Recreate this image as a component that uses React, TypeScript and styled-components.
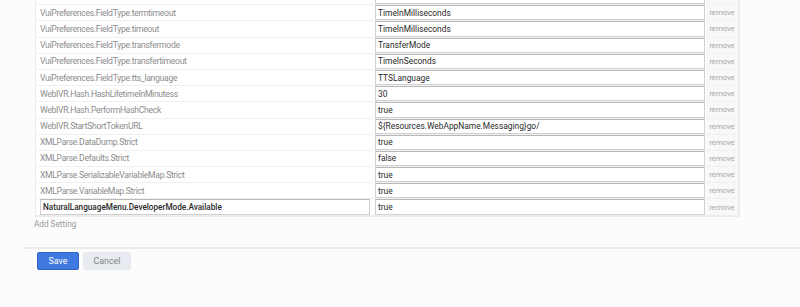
import React from 'react';
import styled, { createGlobalStyle } from 'styled-components';

type Setting = { name: string; value: string; editable?: boolean; hidden?: boolean };

const settings: Setting[] = [
  { name: '', value: '', hidden: true },
  { name: 'VuiPreferences.FieldType.termtimeout', value: 'TimeInMilliseconds' },
  { name: 'VuiPreferences.FieldType.timeout', value: 'TimeInMilliseconds' },
  { name: 'VuiPreferences.FieldType.transfermode', value: 'TransferMode' },
  { name: 'VuiPreferences.FieldType.transfertimeout', value: 'TimeInSeconds' },
  { name: 'VuiPreferences.FieldType.tts_language', value: 'TTSLanguage' },
  { name: 'WebIVR.Hash.HashLifetimeInMinutess', value: '30' },
  { name: 'WebIVR.Hash.PerformHashCheck', value: 'true' },
  { name: 'WebIVR.StartShortTokenURL', value: '${Resources.WebAppName.Messaging}go/' },
  { name: 'XMLParse.DataDump.Strict', value: 'true' },
  { name: 'XMLParse.Defaults.Strict', value: 'false' },
  { name: 'XMLParse.SerializableVariableMap.Strict', value: 'true' },
  { name: 'XMLParse.VariableMap.Strict', value: 'true' },
  { name: 'NaturalLanguageMenu.DeveloperMode.Available', value: 'true', editable: true },
];

const GlobalStyle = createGlobalStyle`
  html, body {
    margin: 0;
    padding: 0;
    background: #fcfcfc;
    font-family: Roboto, "Liberation Sans", Arial, sans-serif;
    overflow: hidden;
  }
`;

const Page = styled.div`
  width: 800px;
  height: 307px;
  overflow: hidden;
`;

const Content = styled.div`
  margin-top: -12px;
  padding-left: 35px;
  width: 705px;
`;

const Table = styled.div`
  background: #fff;
  border-left: 1px solid #ececec;
  border-right: 2px solid #ececec;
  border-bottom: 2px solid #ececec;
`;

const Row = styled.div`
  display: flex;
  height: 16.2px;
  box-sizing: border-box;
  border-top: 1px solid #f0f0f0;
`;

const NameCell = styled.div`
  width: 338px;
  flex: none;
  display: flex;
  align-items: center;
  padding: 0 4px;
  box-sizing: border-box;
  font-size: 8.6px;
  letter-spacing: -0.3px;
  color: #8c8c8c;
  white-space: nowrap;
  overflow: hidden;
`;

const ValueCell = styled.div`
  width: 331px;
  flex: none;
  display: flex;
  align-items: stretch;
  padding: 0 0 0 1px;
  box-sizing: border-box;
`;

const Field = styled.input<{ $bold?: boolean }>`
  width: 100%;
  height: 100%;
  box-sizing: border-box;
  margin: 0;
  padding: 0 2px;
  border: 1px solid #d0d0d0;
  border-top-color: #b8b8b8;
  border-radius: 0;
  background: #fff;
  font-family: Roboto, "Liberation Sans", Arial, sans-serif;
  font-size: ${(p) => (p.$bold ? '8.2px' : '8.4px')};
  font-weight: ${(p) => (p.$bold ? 500 : 400)};
  color: #2a2a2a;
  outline: none;
`;

const NameField = styled(Field)`
  width: 330px;
  letter-spacing: 0;
`;

const RemoveCell = styled.div`
  flex: 1;
  display: flex;
  align-items: center;
  justify-content: center;
  background: #f8f8f8;
  border-left: 1px solid #fff;
  font-size: 7.8px;
  letter-spacing: -0.1px;
  color: #a8a8a8;
  cursor: pointer;
`;

const AddLink = styled.div`
  padding: 2px 0 0 0;
  margin-left: -1px;
  font-size: 8.2px;
  color: #9a9a9a;
  height: 30px;
  box-sizing: border-box;
  cursor: pointer;
`;

const Divider = styled.div`
  margin-left: 24px;
  height: 2px;
  background: #ebebeb;
`;

const Actions = styled.div`
  display: flex;
  gap: 4px;
  padding: 3px 0 0 37px;
`;

const Button = styled.button<{ $primary?: boolean }>`
  height: 18px;
  padding: 0;
  width: ${(p) => (p.$primary ? '42px' : '48px')};
  border-radius: 2px;
  border: 1px solid ${(p) => (p.$primary ? '#2e64c8' : '#e6e9ef')};
  background: ${(p) => (p.$primary ? '#4079e0' : '#e8ebf0')};
  color: ${(p) => (p.$primary ? '#fff' : '#858585')};
  font-family: Roboto, "Liberation Sans", Arial, sans-serif;
  font-size: 8.8px;
  cursor: pointer;
`;

const App: React.FC = () => {
  return (
    <Page>
      <GlobalStyle />
      <Content>
        <Table>
          {settings.map((s, i) => (
            <Row key={i}>
              <NameCell>
                {s.editable ? <NameField $bold readOnly value={s.name} /> : s.name}
              </NameCell>
              <ValueCell>
                <Field readOnly value={s.value} />
              </ValueCell>
              <RemoveCell>{s.hidden ? '' : 'remove'}</RemoveCell>
            </Row>
          ))}
        </Table>
        <AddLink>Add Setting</AddLink>
      </Content>
      <Divider />
      <Actions>
        <Button $primary>Save</Button>
        <Button>Cancel</Button>
      </Actions>
    </Page>
  );
};

export default App;
